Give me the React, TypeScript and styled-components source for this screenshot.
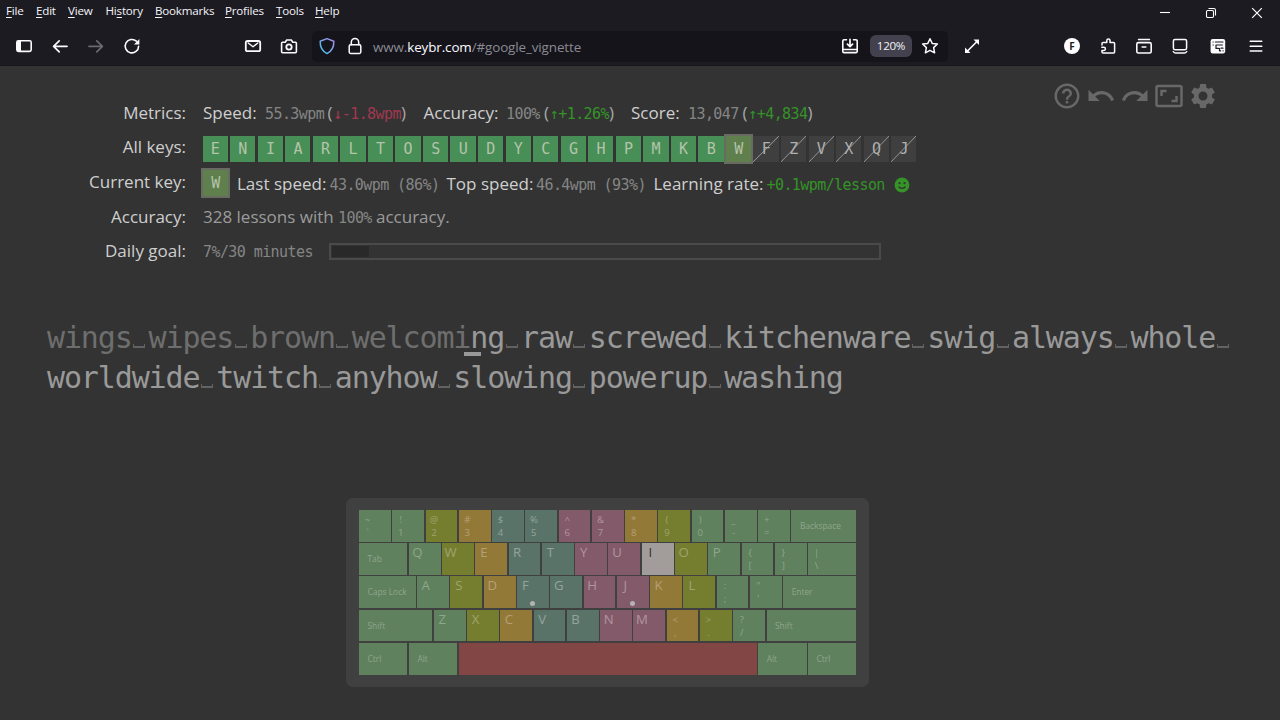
import React from "react";
import styled, { createGlobalStyle } from "styled-components";
import { MdHelpOutline, MdUndo, MdRedo, MdAspectRatio, MdSettings } from "react-icons/md";

const GlobalStyle = createGlobalStyle`
  * { box-sizing: border-box; }
  body { margin: 0; background: #333333; overflow: hidden; }
`;

const sans = `"Open Sans", "Noto Sans", sans-serif`;
const mono = `"DejaVu Sans Mono", monospace`;

const Window = styled.div`
  width: 1280px;
  height: 720px;
  display: flex;
  flex-direction: column;
  background: #333333;
  font-family: ${sans};
  overflow: hidden;
`;

/* ---------- browser chrome ---------- */

const Chrome = styled.header`
  height: 66px;
  flex: none;
  background: #1c1b22;
  border-bottom: 1px solid #17161c;
`;

const MenuBar = styled.nav`
  height: 28px;
  display: flex;
  align-items: flex-start;
  padding-left: 6px;
`;

const MenuItem = styled.span<{ $w: number }>`
  width: ${(p) => p.$w}px;
  flex: none;
  margin-top: 1px;
  font-size: 11.6px;
  line-height: 20px;
  letter-spacing: -0.2px;
  color: #f4f4f8;
  white-space: nowrap;
  u { text-underline-offset: 2px; text-decoration-thickness: 1px; }
`;

const WindowButtons = styled.div`
  display: flex;
  margin-left: auto;
`;

const WindowButton = styled.div`
  width: 46px;
  height: 26px;
  display: grid;
  place-items: center;
`;

const ToolBar = styled.div`
  height: 36px;
  display: flex;
  align-items: center;
`;

const Group = styled.div<{ $ml?: number }>`
  display: flex;
  align-items: center;
  margin-left: ${(p) => p.$ml ?? 0}px;
`;

const ToolButton = styled.div<{ $w?: number; $dim?: boolean }>`
  width: ${(p) => p.$w ?? 36}px;
  height: 30px;
  flex: none;
  display: grid;
  place-items: center;
  color: ${(p) => (p.$dim ? "#6b6a71" : "#fbfbfe")};
`;

const AddressBar = styled.div`
  width: 636px;
  height: 31px;
  margin-left: 5px;
  display: flex;
  align-items: center;
  background: #15141b;
  border-radius: 5px;
`;

const Url = styled.div`
  flex: 1;
  padding: 1px 0 0 5px;
  font-size: 13.4px;
  line-height: 20px;
  letter-spacing: -0.1px;
  color: #8b8a92;
  b { font-weight: 400; color: #fbfbfe; }
`;

const ZoomBadge = styled.div`
  width: 42px;
  height: 22px;
  border-radius: 6px;
  background: #42414d;
  color: #f2f2f6;
  font-size: 11.6px;
  letter-spacing: -0.3px;
  line-height: 22px;
  text-align: center;
`;

const Icon = ({ children, size = 20 }: { children: React.ReactNode; size?: number }) => (
  <svg width={size} height={size} viewBox="0 0 20 20" fill="none" stroke="currentColor" strokeWidth="1.6" strokeLinecap="round" strokeLinejoin="round">
    {children}
  </svg>
);

const SidebarIcon = () => (
  <Icon>
    <rect x="2.8" y="4.8" width="14.4" height="10.6" rx="1.6" />
    <path d="M3 5h4v10H3z" fill="currentColor" stroke="none" />
  </Icon>
);
const BackIcon = () => <Icon><path d="M17 10.3H3.6M9.2 4.8 3.6 10.3l5.6 5.5" strokeWidth="1.7" /></Icon>;
const ForwardIcon = () => <Icon><path d="M3 10.3h13.4M10.8 4.8l5.6 5.5-5.6 5.5" strokeWidth="1.7" /></Icon>;
const ReloadIcon = () => (
  <Icon>
    <path d="M16.6 10.2a6.7 6.7 0 1 1-2.2-5" />
    <path d="M17.4 3v5.4H12z" fill="currentColor" stroke="none" />
  </Icon>
);
const MailIcon = () => (
  <Icon>
    <rect x="2.8" y="5" width="14.4" height="10.2" rx="1.8" strokeWidth="1.8" />
    <path d="m5.2 7 4.8 3.8L14.8 7" strokeWidth="1.4" />
  </Icon>
);
const CameraIcon = () => (
  <Icon>
    <path d="M3.6 6.2h2.6l1.5-2.2h4.6l1.5 2.2h2.6a1 1 0 0 1 1 1v8.6a1 1 0 0 1-1 1H3.6a1 1 0 0 1-1-1V7.2a1 1 0 0 1 1-1z" />
    <circle cx="10" cy="11" r="2.7" strokeWidth="1.8" />
  </Icon>
);
const ShieldIcon = () => (
  <svg width="20" height="20" viewBox="0 0 20 20" fill="none">
    <defs>
      <linearGradient id="shield" x1="0" y1="1" x2="1" y2="0">
        <stop offset="0" stopColor="#35c8e8" />
        <stop offset="0.5" stopColor="#7aa5e8" />
        <stop offset="1" stopColor="#a98be6" />
      </linearGradient>
    </defs>
    <path d="M10 2.6 16.8 5.2c.2 5-1.8 9.8-6.8 12.4C5 15 3 10.2 3.2 5.2z" stroke="url(#shield)" strokeWidth="1.5" strokeLinejoin="round" />
  </svg>
);
const LockIcon = () => (
  <Icon>
    <rect x="4.2" y="8.8" width="11.6" height="8.6" rx="1.4" strokeWidth="1.5" />
    <path d="M6.3 8.8V6.2a3.7 3.7 0 0 1 7.4 0v2.6" strokeWidth="1.5" />
  </Icon>
);
const InstallIcon = () => (
  <Icon>
    <path d="M6.5 3.8H4A1.2 1.2 0 0 0 2.8 5v10.4A1.2 1.2 0 0 0 4 16.6h12a1.2 1.2 0 0 0 1.2-1.2V5A1.2 1.2 0 0 0 16 3.8h-2.5" />
    <path d="M3 13.5h14" strokeWidth="1.4" />
    <path d="M10 3.4v7M7.4 8.2l2.6 2.5 2.6-2.5" strokeWidth="1.7" />
  </Icon>
);
const StarIcon = () => (
  <Icon><path d="m10 2.7 2.2 4.7 5.2.6-3.8 3.6 1 5.2L10 14.3l-4.6 2.5 1-5.2L2.6 8l5.2-.6z" strokeWidth="1.5" /></Icon>
);
const ExpandIcon = () => (
  <Icon>
    <path d="M5 15.5 15.500 5" strokeWidth="1.6" />
    <path d="M11.5 3.5H17V9zM3 11.500V17h5.500z" fill="currentColor" stroke="none" />
  </Icon>
);
const PuzzleIcon = () => (
  <Icon>
    <path d="M4 9V7.6a1 1 0 0 1 1-1h3.8v-2a1.600 1.600 0 0 1 3.200 0v2h3.600a1 1 0 0 1 1 1V16a1 1 0 0 1-1 1H5a1 1 0 0 1-1-1v-1.600h1.800a1.600 1.600 0 0 0 0-3.200H3.800" strokeWidth="1.5" />
  </Icon>
);
const ArchiveIcon = () => (
  <Icon>
    <path d="M4.6 3.5h10.8" />
    <rect x="2.8" y="6.6" width="14.4" height="10.4" rx="1.6" />
    <path d="M8.2 11h3.6" />
  </Icon>
);
const TabletIcon = () => (
  <Icon>
    <rect x="3.4" y="3.5" width="13.2" height="10.2" rx="1.6" strokeWidth="1.5" />
    <path d="M3.2 15.4c.4 1.2 1.2 1.6 2.2 1.6h9.2c1 0 1.8-.4 2.2-1.6" strokeWidth="1.4" />
  </Icon>
);
const ListingIcon = () => (
  <Icon>
    <rect x="2.6" y="3" width="14.6" height="14.4" rx="2.2" fill="currentColor" stroke="none" />
    <path d="M5 6h.2M7.4 6H15M5 9h.3M8 9h6.400M8 9v3.400h2.400M13 12.200h2M11.500 12.400v2.400h1.200M15 14.800h.2" stroke="#1c1b22" strokeWidth="1.2" />
  </Icon>
);
const HamburgerIcon = () => <Icon><path d="M4.2 5.3h11.6M4.2 10.2h11.6M4.2 15.1h11.6" strokeWidth="1.5" /></Icon>;

const AccountBadge = styled.div`
  width: 16px;
  height: 16px;
  border-radius: 50%;
  background: #ffffff;
  color: #1c1b22;
  font: 700 10px/16px ${sans};
  text-align: center;
`;

/* ---------- statistics ---------- */

const Stats = styled.section`
  position: relative;
  padding-top: 29px;
  height: 251.5px;
  flex: none;
`;

const StatRow = styled.div<{ $h: number }>`
  display: flex;
  align-items: center;
  height: ${(p) => p.$h}px;
`;

const Label = styled.div<{ $down?: number }>`
  width: 186px;
  margin: ${(p) => p.$down ?? 0}px 17px 0 0;
  text-align: right;
  font-size: 17px;
  line-height: 23px;
  color: #cfcfcf;
  flex: none;
`;

const Values = styled.div<{ $down?: number }>`
  display: flex;
  align-items: baseline;
  margin-top: ${(p) => p.$down ?? 2}px;
  font-size: 17px;
  line-height: 23px;
`;

const Name = styled.span<{ $w: number; $muted?: boolean }>`
  width: ${(p) => p.$w}px;
  flex: none;
  white-space: nowrap;
  color: ${(p) => (p.$muted ? "#9b9b9b" : "#cfcfcf")};
`;

type Tone = "plain" | "good" | "bad";
const tones: Record<Tone, string> = { plain: "#858585", good: "#349427", bad: "#a23850" };

const Num = styled.span<{ $w?: number; $tone?: Tone }>`
  width: ${(p) => (p.$w ? `${p.$w}px` : "auto")};
  flex: none;
  font-family: ${mono};
  font-size: 15px;
  letter-spacing: -0.58px;
  white-space: nowrap;
  color: ${(p) => tones[p.$tone ?? "plain"]};
`;

const Delta = styled.span<{ $w: number }>`
  width: ${(p) => p.$w}px;
  flex: none;
  white-space: nowrap;
  color: #a8a8a8;
  ${Num} { padding-left: 0.8px; }
`;

const KeyList = styled.div`
  display: flex;
  gap: 2.25px;
  margin: 5px 0 0 -0.5px;
`;

type TileKind = "done" | "current" | "locked";
const tileColors: Record<TileKind, string> = { done: "#478f56", current: "#5f7f4c", locked: "#3f3f3f" };

const Tile = styled.div<{ $kind: TileKind }>`
  width: 25.3px;
  height: 26px;
  flex: none;
  background: ${(p) =>
    p.$kind === "locked"
      ? "linear-gradient(to bottom right, transparent calc(50% - 0.8px), #8c8c8c 50%, transparent calc(50% + 0.8px)) #3f3f3f"
      : tileColors[p.$kind]};
  box-shadow: ${(p) => (p.$kind === "current" ? "0 0 0 2px #686b61" : "none")};
  color: ${(p) => (p.$kind === "locked" ? "#b0b0b0" : "#b5c3ab")};
  font: 15px/26px ${mono};
  letter-spacing: -0.3px;
  text-align: center;
`;

const LastTile = styled.div`
  width: 34px;
  margin-top: 4px;
  flex: none;
`;

const Smiley = styled.svg`
  align-self: center;
`;

const Track = styled.div`
  width: 551.5px;
  height: 17px;
  margin-top: 2px;
  padding: 1px;
  border: 2px solid #4a4a4a;
`;

const Fill = styled.div`
  height: 100%;
  background: #292929;
`;

const Actions = styled.div`
  position: absolute;
  top: 14.5px;
  left: 1051.5px;
  display: flex;
  gap: 4px;
  color: #686868;
`;

/* ---------- lesson text ---------- */

const Lesson = styled.main`
  height: 82px;
  padding-left: 47px;
  flex: none;
  font: 30px/40.5px ${mono};
  letter-spacing: -1.13px;
  color: #999999;
  white-space: pre;
`;

const Typed = styled.span`
  color: #6e6e6e;
`;

const Gap = styled.span`
  display: inline-block;
  width: 12px;
  height: 4px;
  margin: 0 3.46px 0 1.46px;
  border: 1px solid #626262;
  border-bottom-width: 2px;
  border-top: 0;
  line-height: 0;
  overflow: hidden;
  vertical-align: 0;
`;

const CaretChar = styled.span`
  position: relative;
  &::after {
    content: "";
    position: absolute;
    left: -6px;
    top: 32px;
    width: 17px;
    height: 4.5px;
    background: #999999;
  }
`;

/* ---------- keyboard ---------- */

const KeyboardPanel = styled.section`
  width: 523px;
  height: 189px;
  margin: 98.5px 0 0 346px;
  padding: 12px 12px 0 13px;
  flex: none;
  border-radius: 7px;
  background: #404040;
`;

const KeyRow = styled.div`
  display: flex;
  height: 33.2px;
`;

type Finger = "green" | "olive" | "amber" | "teal" | "mauve" | "red" | "lit";
const fingers: Record<Finger, [string, string]> = {
  green: ["#5f815d", "#8fa68d"],
  olive: ["#757e2f", "#a0a36f"],
  amber: ["#937938", "#b5a075"],
  teal: ["#5a7369", "#94a49d"],
  mauve: ["#835a6a", "#b0959f"],
  red: ["#824644", "#824644"],
  lit: ["#a29c9a", "#333333"],
};

const Cap = styled.div<{ $u: number; $f: Finger }>`
  position: relative;
  flex: none;
  width: ${(p) => p.$u * 33.27 - 1.5}px;
  height: 31.9px;
  margin-right: 1.5px;
  background: ${(p) => fingers[p.$f][0]};
  color: ${(p) => fingers[p.$f][1]};
`;

const Glyph = styled.div<{ $small?: boolean }>`
  width: 17px;
  text-align: center;
  font-size: ${(p) => (p.$small ? 9.5 : 13.2)}px;
  line-height: ${(p) => (p.$small ? 13 : 19)}px;
  &:first-child { padding-top: ${(p) => (p.$small ? 3 : 0)}px; }
`;

const CapLabel = styled.div`
  padding-left: 8.5px;
  font-size: 8.4px;
  line-height: 32px;
`;

const Bump = styled.i`
  position: absolute;
  left: 50%;
  bottom: 2px;
  width: 5px;
  height: 5px;
  margin-left: -2.5px;
  border-radius: 50%;
  background: #b3b3b3;
`;

type KeyDef = { t: string; f: Finger; u?: number; named?: boolean; bump?: boolean };
const k = (t: string, f: Finger, u = 1): KeyDef => ({ t, f, u });
const named = (t: string, u: number): KeyDef => ({ t, f: "green", u, named: true });

const rows: KeyDef[][] = [
  [k("~`", "green"), k("!1", "green"), k("@2", "olive"), k("#3", "amber"), k("$4", "teal"), k("%5", "teal"), k("^6", "mauve"), k("&7", "mauve"), k("*8", "amber"), k("(9", "olive"), k(")0", "green"), k("_-", "green"), k("+=", "green"), named("Backspace", 2)],
  [named("Tab", 1.5), k("Q", "green"), k("W", "olive"), k("E", "amber"), k("R", "teal"), k("T", "teal"), k("Y", "mauve"), k("U", "mauve"), k("I", "lit"), k("O", "olive"), k("P", "green"), k("{[", "green"), k("}]", "green"), k("|\\", "green", 1.5)],
  [named("Caps Lock", 1.75), k("A", "green"), k("S", "olive"), k("D", "amber"), { t: "F", f: "teal", bump: true }, k("G", "teal"), k("H", "mauve"), { t: "J", f: "mauve", bump: true }, k("K", "amber"), k("L", "olive"), k(":;", "green"), k("\"'", "green"), named("Enter", 2.25)],
  [named("Shift", 2.25), k("Z", "green"), k("X", "olive"), k("C", "amber"), k("V", "teal"), k("B", "teal"), k("N", "mauve"), k("M", "mauve"), k("<,", "amber"), k(">.", "olive"), k("?/", "green"), named("Shift", 2.75)],
  [named("Ctrl", 1.5), named("Alt", 1.5), k("", "red", 9), named("Alt", 1.5), named("Ctrl", 1.5)],
];

const KeyCap = ({ def }: { def: KeyDef }) => (
  <Cap $u={def.u ?? 1} $f={def.f}>
    {def.named ? <CapLabel>{def.t}</CapLabel> : [...def.t].map((c) => <Glyph key={c} $small={def.t.length > 1}>{c}</Glyph>)}
    {def.bump && <Bump />}
  </Cap>
);

const menus: [string, number, string][] = [
  ["File", 30, "F"], ["Edit", 32, "E"], ["View", 37.5, "V"], ["History", 49.5, "s"],
  ["Bookmarks", 70, "B"], ["Profiles", 51, "P"], ["Tools", 39, "T"], ["Help", 40, "H"],
];

const MenuText = ({ text, hot }: { text: string; hot: string }) => {
  const i = text.indexOf(hot);
  return <>{text.slice(0, i)}<u>{hot}</u>{text.slice(i + 1)}</>;
};

const Words = ({ text }: { text: string }) => (
  <>
    {text.split(" ").map((w, i) => (
      <React.Fragment key={i}>{i > 0 && <Gap> </Gap>}{w}</React.Fragment>
    ))}
  </>
);

const allKeys = [..."ENIARLTOSUDYCGHPMKBWFZVXQJ"];

export default function App() {
  return (
    <Window>
      <GlobalStyle />
      <Chrome>
        <MenuBar>
          {menus.map(([t, w, hot]) => <MenuItem key={t} $w={w}><MenuText text={t} hot={hot} /></MenuItem>)}
          <WindowButtons>
            <WindowButton><svg width="12" height="12" viewBox="0 0 12 12" stroke="#fff" strokeWidth="1.1"><path d="M1 5.5h10" /></svg></WindowButton>
            <WindowButton><svg width="12" height="12" viewBox="0 0 12 12" stroke="#fff" strokeWidth="1.1" fill="none"><rect x="1.5" y="3.5" width="7" height="7" rx="1.2" /><path d="M3.5 1.5h5.2a1.8 1.8 0 0 1 1.8 1.8v5.2" /></svg></WindowButton>
            <WindowButton><svg width="12" height="12" viewBox="0 0 12 12" stroke="#fff" strokeWidth="1.2"><path d="m1.2 1.2 9.6 9.6m0-9.6-9.6 9.6" /></svg></WindowButton>
          </WindowButtons>
        </MenuBar>
        <ToolBar>
          <Group $ml={6}>
            <ToolButton><SidebarIcon /></ToolButton>
            <ToolButton><BackIcon /></ToolButton>
            <ToolButton $dim><ForwardIcon /></ToolButton>
            <ToolButton><ReloadIcon /></ToolButton>
          </Group>
          <Group $ml={84}>
            <ToolButton $w={37}><MailIcon /></ToolButton>
            <ToolButton><CameraIcon /></ToolButton>
          </Group>
          <AddressBar>
            <ToolButton $w={30}><ShieldIcon /></ToolButton>
            <ToolButton $w={26}><LockIcon /></ToolButton>
            <Url>www.<b>keybr.com</b>/#google_vignette</Url>
            <ToolButton $w={40}><InstallIcon /></ToolButton>
            <ZoomBadge>120%</ZoomBadge>
            <ToolButton $w={36}><StarIcon /></ToolButton>
          </AddressBar>
          <Group $ml={6}><ToolButton><ExpandIcon /></ToolButton></Group>
          <Group $ml={64}>
            <ToolButton><AccountBadge>F</AccountBadge></ToolButton>
            <ToolButton><PuzzleIcon /></ToolButton>
            <ToolButton><ArchiveIcon /></ToolButton>
            <ToolButton><TabletIcon /></ToolButton>
            <ToolButton $w={39}><ListingIcon /></ToolButton>
            <ToolButton $w={38}><HamburgerIcon /></ToolButton>
          </Group>
        </ToolBar>
      </Chrome>

      <Stats>
        <Actions>
          <MdHelpOutline size={30} /><MdUndo size={30} /><MdRedo size={30} /><MdAspectRatio size={30} /><MdSettings size={30} />
        </Actions>
        <StatRow $h={34}>
          <Label $down={1}>Metrics:</Label>
          <Values>
            <Name $w={62}>Speed:</Name><Num $w={62.5}>55.3wpm</Num>
            <Delta $w={96}>(<Num $tone="bad">↓-1.8wpm</Num>)</Delta>
            <Name $w={82.5}>Accuracy:</Name><Num $w={38}>100%</Num>
            <Delta $w={87}>(<Num $tone="good">↑+1.26%</Num>)</Delta>
            <Name $w={57}>Score:</Name><Num $w={54.5}>13,047</Num>
            <Delta $w={74}>(<Num $tone="good">↑+4,834</Num>)</Delta>
          </Values>
        </StatRow>
        <StatRow $h={34}>
          <Label>All keys:</Label>
          <KeyList>
            {allKeys.map((c, i) => <Tile key={c} $kind={i < 19 ? "done" : i === 19 ? "current" : "locked"}>{c}</Tile>)}
          </KeyList>
        </StatRow>
        <StatRow $h={36}>
          <Label>Current key:</Label>
          <LastTile><Tile $kind="current">W</Tile></LastTile>
          <Values $down={7}>
            <Name $w={92.5}>Last speed:</Name><Num $w={117}>43.0wpm (86%)</Num>
            <Name $w={89.5}>Top speed:</Name><Num $w={117.5}>46.4wpm (93%)</Num>
            <Name $w={113}>Learning rate:</Name><Num $w={127.5} $tone="good">+0.1wpm/lesson</Num>
            <Smiley width="16" height="16" viewBox="0 0 16 16">
              <circle cx="8" cy="8" r="7.4" fill="#349427" />
              <circle cx="5.5" cy="6.2" r="1.1" fill="#333" /><circle cx="10.5" cy="6.2" r="1.1" fill="#333" />
              <path d="M4.600 9.600c1.200 2.200 5.600 2.200 6.800 0" fill="none" stroke="#333" strokeWidth="1.400" />
            </Smiley>
          </Values>
        </StatRow>
        <StatRow $h={34}>
          <Label>Accuracy:</Label>
          <Values>
            <Name $w={135} $muted>328 lessons with</Name><Num $w={38}>100%</Num><Name $w={80} $muted>accuracy.</Name>
          </Values>
        </StatRow>
        <StatRow $h={34}>
          <Label>Daily goal:</Label>
          <Values $down={4}><Num $w={126}>7%/30 minutes</Num></Values>
          <Track><Fill style={{ width: "6.7%" }} /></Track>
        </StatRow>
      </Stats>

      <Lesson>
        <div>
          <Typed><Words text="wings wipes brown welcomi" /></Typed>
          <CaretChar>n</CaretChar>
          <Words text="g raw screwed kitchenware swig always whole " />
        </div>
        <div><Words text="worldwide twitch anyhow slowing powerup washing" /></div>
      </Lesson>

      <KeyboardPanel>
        {rows.map((r, i) => (
          <KeyRow key={i}>{r.map((d, j) => <KeyCap key={j} def={d} />)}</KeyRow>
        ))}
      </KeyboardPanel>
    </Window>
  );
}
